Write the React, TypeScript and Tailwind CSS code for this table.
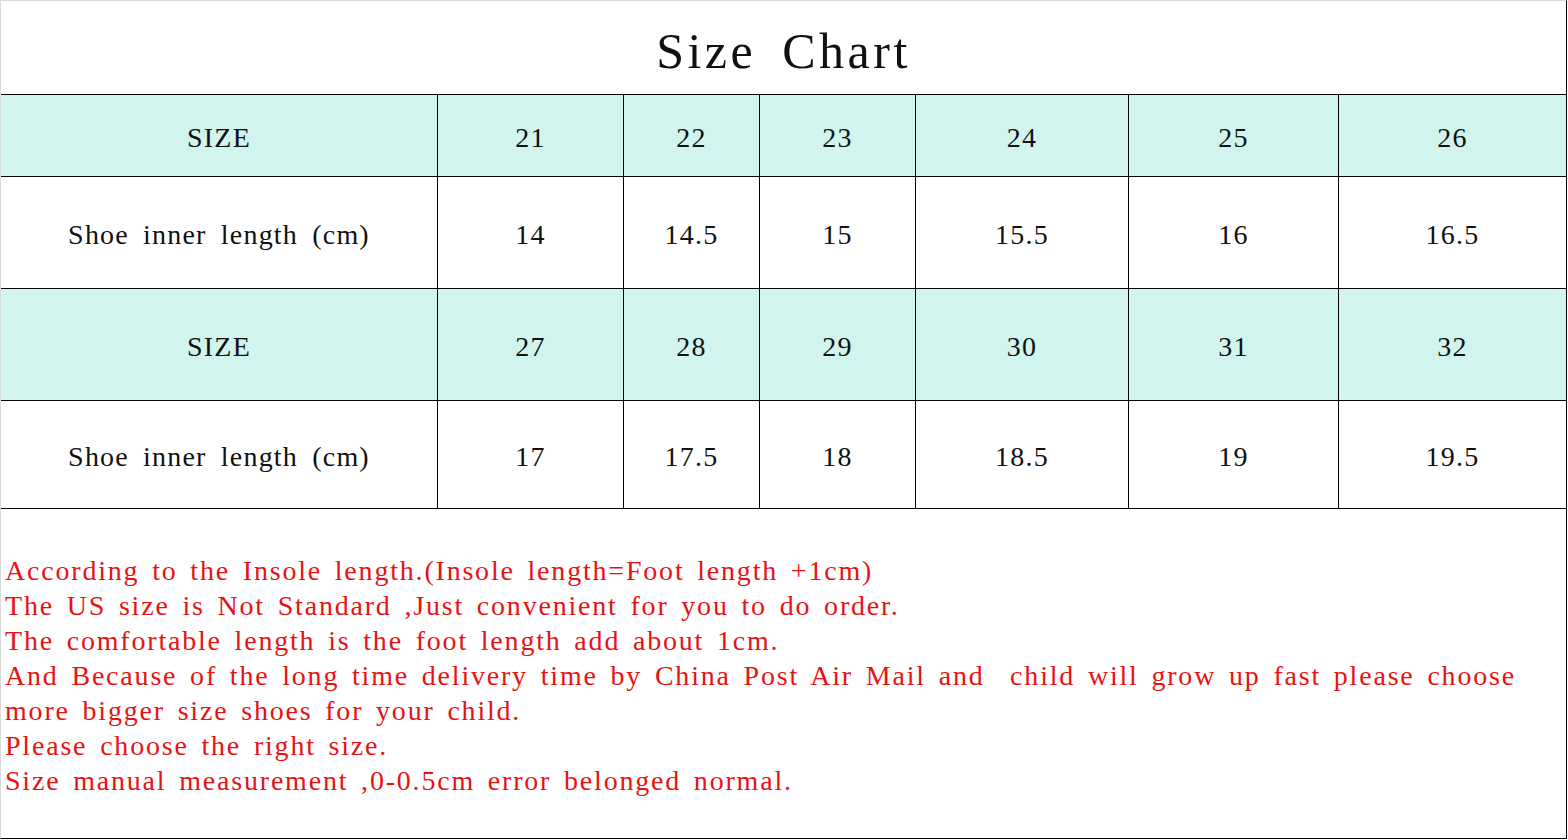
const colWidths = ['w-[436px]', 'w-[186px]', 'w-[136px]', 'w-[156px]', 'w-[213px]', 'w-[210px]', 'w-[228px]'];

const rows = [
  { cells: ['SIZE', '21', '22', '23', '24', '25', '26'], tint: true, height: 'h-[82px]' },
  { cells: ['Shoe inner length (cm)', '14', '14.5', '15', '15.5', '16', '16.5'], tint: false, height: 'h-[112px]' },
  { cells: ['SIZE', '27', '28', '29', '30', '31', '32'], tint: true, height: 'h-[112px]' },
  { cells: ['Shoe inner length (cm)', '17', '17.5', '18', '18.5', '19', '19.5'], tint: false, height: 'h-[108px]' },
];

const notes = [
  'According to the Insole length.(Insole length=Foot length +1cm)',
  'The US size is Not Standard ,Just convenient for you to do order.',
  'The comfortable length is the foot length add about 1cm.',
  'And Because of the long time delivery time by China Post Air Mail and  child will grow up fast please choose',
  'more bigger size shoes for your child.',
  'Please choose the right size.',
  'Size manual measurement ,0-0.5cm error belonged normal.',
];

const serif = "font-['Liberation_Serif','Times_New_Roman',serif]";

export default function App() {
  return (
    <div className="w-[1568px] h-[840px] bg-white">
      <div className="w-[1567px] h-[839px] border border-l-[#d9d9d9] border-t-[#d9d9d9] border-r-black border-b-black flex flex-col">
        <div className="h-[93px] flex items-center justify-center pt-[6px]">
          <h1 className={`${serif} text-[50px] leading-none tracking-[3.5px] [word-spacing:10px] text-[#111]`}>
            Size Chart
          </h1>
        </div>

        {rows.map((row, i) => (
          <div
            key={i}
            className={`flex border-t border-black ${row.height} ${row.tint ? 'bg-[#d2f4ef]' : 'bg-white'}`}
          >
            {row.cells.map((cell, j) => (
              <div
                key={j}
                className={`${colWidths[j]} ${j > 0 ? 'border-l border-black' : ''} flex items-center justify-center pt-[4px] ${serif} text-[28px] leading-none tracking-[1.2px] [word-spacing:6px] text-[#111] whitespace-pre`}
              >
                {cell}
              </div>
            ))}
          </div>
        ))}

        <div className="flex-1 border-t border-black pt-[44px] pl-[4px]">
          {notes.map((line, i) => (
            <p
              key={i}
              className={`${serif} text-[28px] leading-[35px] tracking-[1.8px] [word-spacing:4px] text-[#e81212] whitespace-pre`}
            >
              {line}
            </p>
          ))}
        </div>
      </div>
    </div>
  );
}
